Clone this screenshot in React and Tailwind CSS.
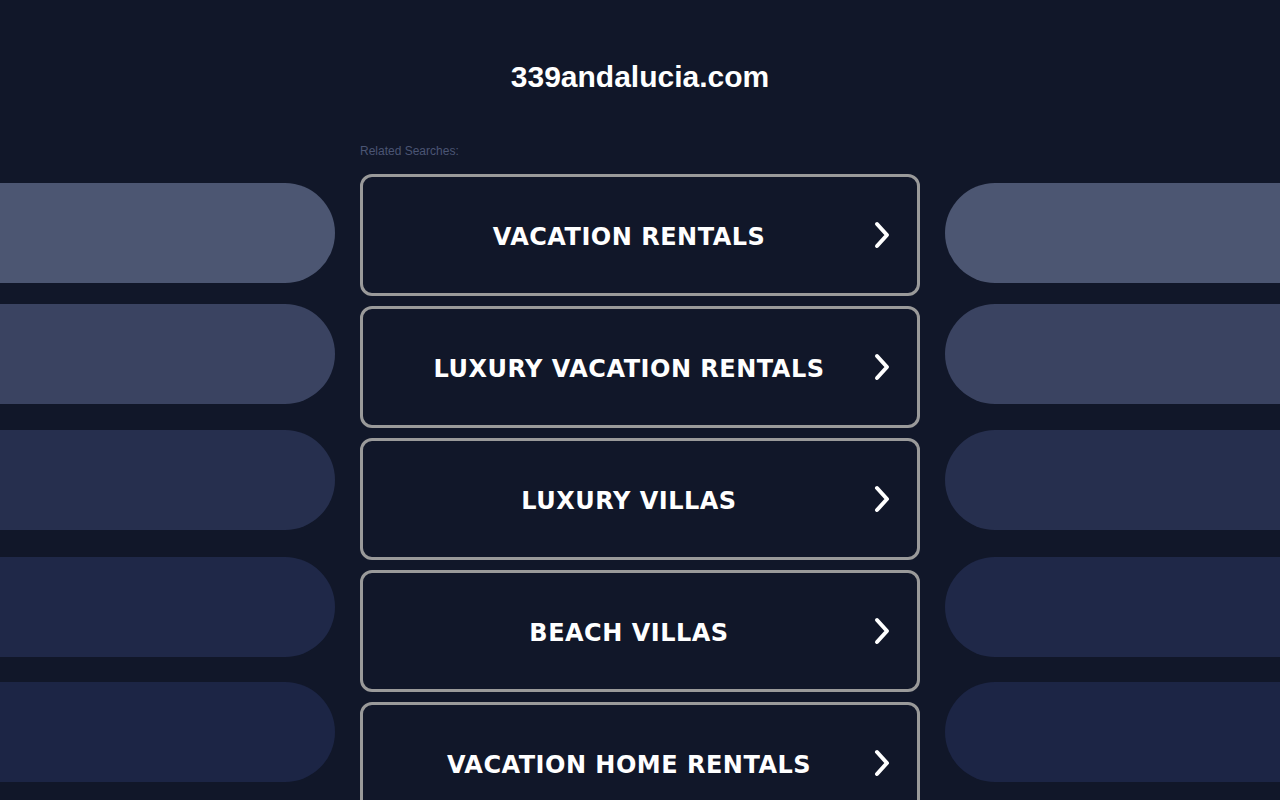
import React from "react";

const items = [
  "VACATION RENTALS",
  "LUXURY VACATION RENTALS",
  "LUXURY VILLAS",
  "BEACH VILLAS",
  "VACATION HOME RENTALS",
];

const bars = [
  { c: "bg-[#4c5672]", m: "mt-0" },
  { c: "bg-[#3a4361]", m: "mt-[21px]" },
  { c: "bg-[#262f4e]", m: "mt-[26px]" },
  { c: "bg-[#1f2848]", m: "mt-[27px]" },
  { c: "bg-[#1c2545]", m: "mt-[25px]" },
];

function Chevron() {
  return (
    <svg width="20" height="28" viewBox="0 0 20 28" fill="none">
      <polyline
        points="5,3 15,14 5,25"
        stroke="white"
        strokeWidth="4"
        strokeLinecap="round"
        strokeLinejoin="round"
      />
    </svg>
  );
}

export default function App() {
  return (
    <div className="h-[830px] overflow-hidden bg-[#111729] font-['Liberation_Sans',Arial,sans-serif]">
      <div className="h-[140px] pt-[60px] text-center">
        <h1 className="text-[30px] leading-[34px] font-bold text-white">339andalucia.com</h1>
      </div>
      <div className="flex">
        <div className="flex-1 pt-[43px] pr-[25px] flex flex-col">
          {bars.map((b, i) => (
            <div key={i} className={`h-[100px] rounded-r-full ${b.c} ${b.m}`} />
          ))}
        </div>
        <div className="w-[560px]">
          <div className="text-[12px] leading-[20px] pt-[1px] h-[34px] text-[#4b5574]">Related Searches:</div>
          <div className="flex flex-col gap-[10px]">
            {items.map((t) => (
              <div
                key={t}
                className="h-[122px] border-[3px] border-[#9a9a9a] rounded-[12px] flex items-center relative"
              >
                <div className="flex-1 text-center pr-[22px] pt-[3px] text-white font-bold text-[24px] tracking-[0.5px] font-['DejaVu_Sans',Verdana,sans-serif]">
                  {t}
                </div>
                <div className="absolute right-[25px] top-1/2 -translate-y-1/2">
                  <Chevron />
                </div>
              </div>
            ))}
          </div>
        </div>
        <div className="flex-1 pt-[43px] pl-[25px] flex flex-col">
          {bars.map((b, i) => (
            <div key={i} className={`h-[100px] rounded-l-full ${b.c} ${b.m}`} />
          ))}
        </div>
      </div>
    </div>
  );
}
